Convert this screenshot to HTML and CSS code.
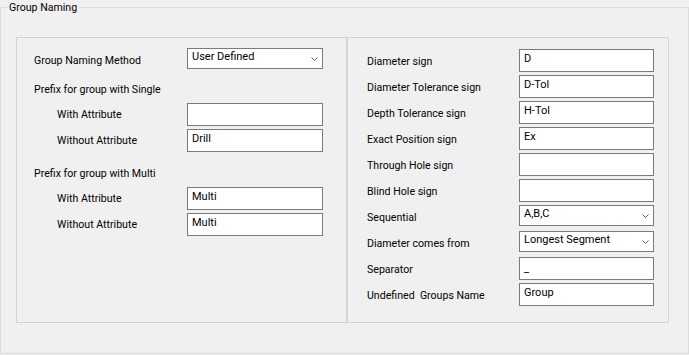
FILE: index.html
```html
<!DOCTYPE html>
<html>
<head lang="en">
    <meta charset="UTF-8">
    <title>Group Naming</title>
    <link rel="stylesheet" href="styles.css">
</head>
<body>
<fieldset class="group">
    <legend>Group Naming</legend>
    <div class="panels">
        <div class="panel panel-left">
            <div class="row row-top">
                <span class="lbl">Group Naming Method</span>
                <div class="field combo">User Defined
                    <svg class="chev" width="7" height="4" viewBox="0 0 7 4"><path d="M0.5 0.5 L3.5 3.5 L6.5 0.5" fill="none" stroke="#606060" stroke-width="1"/></svg>
                </div>
            </div>
            <div class="heading first">Prefix for group with Single</div>
            <div class="row sub">
                <span class="lbl">With Attribute</span>
                <div class="field"></div>
            </div>
            <div class="row sub">
                <span class="lbl">Without Attribute</span>
                <div class="field">Drill</div>
            </div>
            <div class="heading">Prefix for group with Multi</div>
            <div class="row sub">
                <span class="lbl">With Attribute</span>
                <div class="field">Multi</div>
            </div>
            <div class="row sub last">
                <span class="lbl">Without Attribute</span>
                <div class="field">Multi</div>
            </div>
        </div>
        <div class="panel panel-right">
            <div class="row">
                <span class="lbl">Diameter sign</span>
                <div class="field">D</div>
            </div>
            <div class="row">
                <span class="lbl">Diameter Tolerance sign</span>
                <div class="field">D-Tol</div>
            </div>
            <div class="row">
                <span class="lbl">Depth Tolerance sign</span>
                <div class="field">H-Tol</div>
            </div>
            <div class="row">
                <span class="lbl">Exact Position sign</span>
                <div class="field">Ex</div>
            </div>
            <div class="row">
                <span class="lbl">Through Hole sign</span>
                <div class="field"></div>
            </div>
            <div class="row">
                <span class="lbl">Blind Hole sign</span>
                <div class="field"></div>
            </div>
            <div class="row">
                <span class="lbl">Sequential</span>
                <div class="field combo">A,B,C
                    <svg class="chev" width="7" height="4" viewBox="0 0 7 4"><path d="M0.5 0.5 L3.5 3.5 L6.5 0.5" fill="none" stroke="#606060" stroke-width="1"/></svg>
                </div>
            </div>
            <div class="row">
                <span class="lbl">Diameter comes from</span>
                <div class="field combo">Longest Segment
                    <svg class="chev" width="7" height="4" viewBox="0 0 7 4"><path d="M0.5 0.5 L3.5 3.5 L6.5 0.5" fill="none" stroke="#606060" stroke-width="1"/></svg>
                </div>
            </div>
            <div class="row">
                <span class="lbl">Separator</span>
                <div class="field underscore">_</div>
            </div>
            <div class="row">
                <span class="lbl">Undefined&nbsp; Groups Name</span>
                <div class="field">Group</div>
            </div>
        </div>
    </div>
</fieldset>
</body>
</html>
```

FILE: styles.css
```css
* {
    margin: 0;
    padding: 0;
    box-sizing: border-box;
}

html, body {
    background-color: #f0f0f0;
}

body {
    width: 689px;
    height: 355px;
    font-family: Roboto, "Liberation Sans", sans-serif;
    font-size: 10.6px;
    line-height: 13px;
    color: #000;
}

.group {
    margin: 0;
    min-width: 0;
    border: 1px solid #dcdcdc;
    padding: 23px 19px 30px 15px;
}

.group legend {
    margin-left: -9px;
    padding: 1px 2px 0;
}

.panels {
    display: flex;
    height: 286px;
}

.panel {
    border: 1px solid #d5d5d5;
}

.panel-left {
    width: 331px;
    padding: 10px 0 0 17px;
}

.panel-right {
    width: 322px;
    padding: 11px 0 0 19px;
}

.row {
    display: flex;
    align-items: center;
    height: 23px;
}

.panel-right .row + .row {
    margin-top: 3px;
}

.panel-right .lbl {
    width: 152px;
    padding-top: 2px;
}

.row-top {
    height: 21px;
}

.row-top .lbl {
    width: 153px;
    padding-top: 4px;
}

.sub {
    margin-top: 3px;
}

.sub .lbl {
    width: 130px;
    margin-left: 23px;
}

.heading {
    height: 20px;
    line-height: 20px;
    margin-top: 12px;
}

.heading.first {
    margin-top: 11px;
}

.field {
    position: relative;
    width: 136px;
    height: 23px;
    padding: 2px 0 0 4px;
    background-color: #fff;
    border: 1px solid #7a7a7a;
    font-size: 11px;
    white-space: nowrap;
}

.panel-right .field {
    width: 135px;
}

.underscore {
    padding-top: 4px;
}

.combo {
    height: 21px;
    align-self: flex-start;
    padding-top: 1px;
}

.chev {
    position: absolute;
    right: 4px;
    top: 8px;
}
```
